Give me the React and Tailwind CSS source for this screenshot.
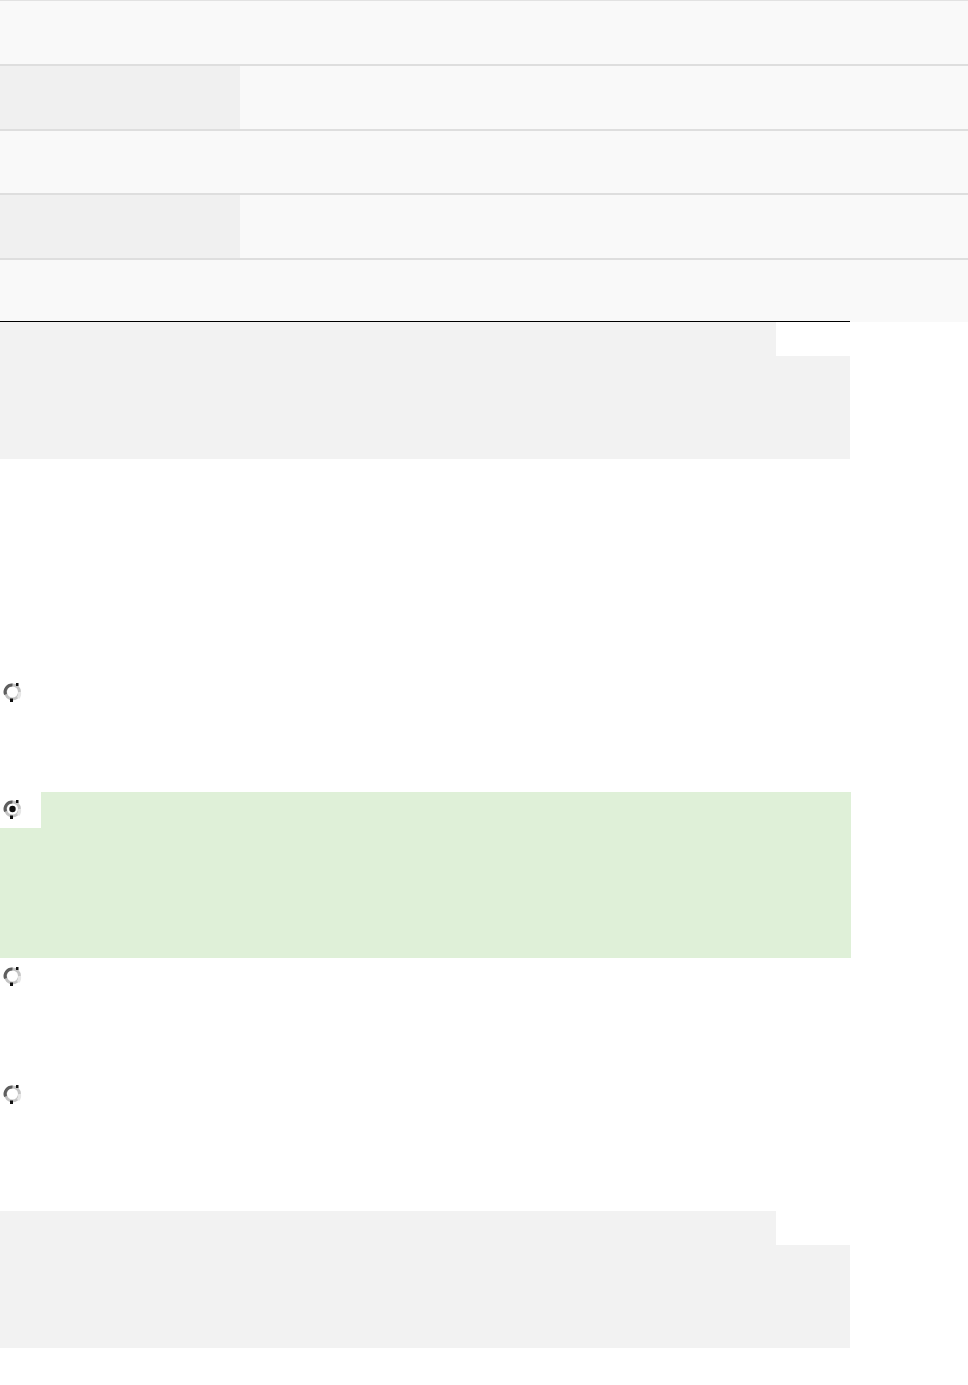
const ROWS = [
  { h: 'h-[64px]', split: false },
  { h: 'h-[65px]', split: true },
  { h: 'h-[64px]', split: false },
  { h: 'h-[65px]', split: true },
  { h: 'h-[64px]', split: false },
]

function Radio({ checked }) {
  return (
    <svg width="21" height="22" viewBox="0 0 21 22" className="block">
      <circle cx="10.5" cy="11" r="7" fill="#fff" stroke="#c4c4c4" strokeWidth="3" />
      <path d="M3.5 13.5a7 7 0 0 1 7-9.5" fill="none" stroke="#5e5e5e" strokeWidth="3" />
      <path d="M16 17a7 7 0 0 0 1.5-6" fill="none" stroke="#e6e6e6" strokeWidth="3" />
      <rect x="14" y="2" width="2.5" height="3" fill="#111" />
      <rect x="8" y="17.5" width="3" height="3.5" fill="#111" />
      {checked && <circle cx="10.5" cy="11" r="3.2" fill="#111" />}
    </svg>
  )
}

function NotchBox() {
  return (
    <div className="w-[850px]">
      <div className="flex h-[34px]">
        <div className="w-[776px] bg-[#f2f2f2]" />
        <div className="flex-1 bg-white" />
      </div>
      <div className="h-[103px] bg-[#f2f2f2]" />
    </div>
  )
}

function Option({ checked }) {
  if (checked) {
    return (
      <div className="w-[851px]">
        <div className="flex h-[36px]">
          <div className="w-[41px] bg-white pl-[2px] pt-[6px]">
            <Radio checked />
          </div>
          <div className="flex-1 bg-[#dff0d8]" />
        </div>
        <div className="h-[130px] bg-[#dff0d8]" />
      </div>
    )
  }
  return (
    <div className="w-[850px] h-[118px] pl-[2px] pt-[7px]">
      <Radio />
    </div>
  )
}

export default function App() {
  return (
    <div className="w-[968px] min-h-[1385px] bg-white" style={{ fontFamily: '"Liberation Sans", Arial, sans-serif' }}>
      {/* 상단 표 */}
      <div className="bg-[#f9f9f9] h-[322px]">
        {ROWS.map((row, i) => (
          <div key={i} className={`${row.h} flex ${i === 0 ? 'border-t border-[#e2e2e2]' : 'border-t-2 border-[#dedede]'}`}>
            {row.split && <div className="w-[240px] bg-[#f0f0f0]" />}
            <div className="flex-1" />
          </div>
        ))}
      </div>
      <div className="w-[850px] border-t border-black -mt-px" />
      <NotchBox />

      <div className="h-[215px]" />

      {/* 선택지 */}
      <Option />
      <Option checked />
      <Option />
      <Option />

      <div className="h-[17px]" />
      <NotchBox />
    </div>
  )
}
